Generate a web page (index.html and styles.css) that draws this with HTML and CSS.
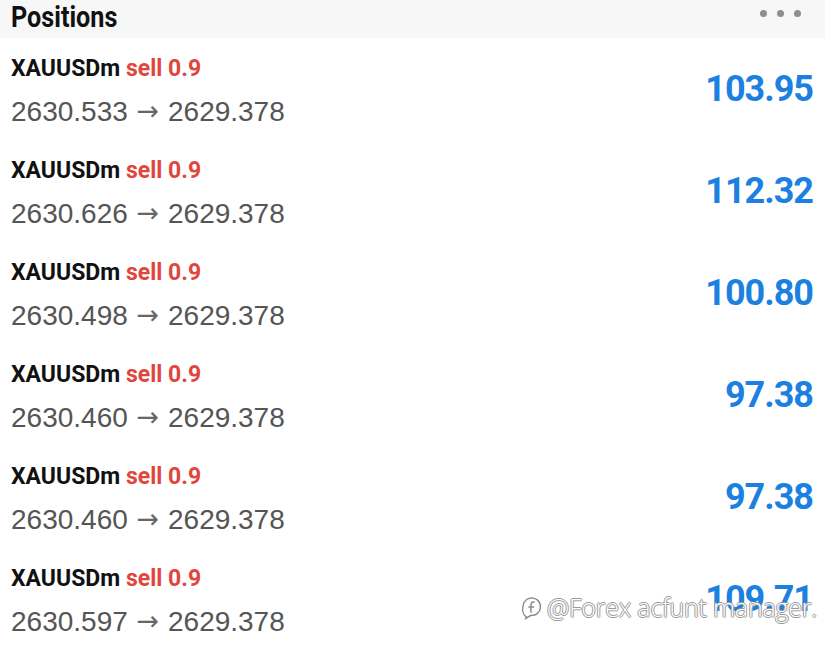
FILE: index.html
```html
<!DOCTYPE html>
<html lang="en">
<head>
  <meta charset="UTF-8">
  <title>Positions</title>
  <link rel="stylesheet" href="styles.css">
</head>
<body>

<div class="header">
  <span class="title">Positions</span>
  <div class="dots"><i></i><i></i><i></i></div>
</div>

<ul class="positions">
  <li class="row">
    <div class="info">
      <div class="symbol">XAUUSDm <span class="side">sell 0.9</span></div>
      <div class="prices">2630.533 <span class="arrow">→</span> 2629.378</div>
    </div>
    <div class="profit">103.95</div>
  </li>
  <li class="row">
    <div class="info">
      <div class="symbol">XAUUSDm <span class="side">sell 0.9</span></div>
      <div class="prices">2630.626 <span class="arrow">→</span> 2629.378</div>
    </div>
    <div class="profit">112.32</div>
  </li>
  <li class="row">
    <div class="info">
      <div class="symbol">XAUUSDm <span class="side">sell 0.9</span></div>
      <div class="prices">2630.498 <span class="arrow">→</span> 2629.378</div>
    </div>
    <div class="profit">100.80</div>
  </li>
  <li class="row">
    <div class="info">
      <div class="symbol">XAUUSDm <span class="side">sell 0.9</span></div>
      <div class="prices">2630.460 <span class="arrow">→</span> 2629.378</div>
    </div>
    <div class="profit">97.38</div>
  </li>
  <li class="row">
    <div class="info">
      <div class="symbol">XAUUSDm <span class="side">sell 0.9</span></div>
      <div class="prices">2630.460 <span class="arrow">→</span> 2629.378</div>
    </div>
    <div class="profit">97.38</div>
  </li>
  <li class="row">
    <div class="info">
      <div class="symbol">XAUUSDm <span class="side">sell 0.9</span></div>
      <div class="prices">2630.597 <span class="arrow">→</span> 2629.378</div>
    </div>
    <div class="profit">109.71</div>
  </li>
</ul>

<!-- watermark -->
<div class="watermark">
  <svg width="21" height="25" viewBox="0 0 20 24">
    <path d="M5 21 C1.5 19 1 14 2 10 C3 5 7 2.5 11.5 3 C16.5 3.5 19 8 18.5 12.5 C18 17 14 20 9.5 19.5 L4.5 22.5 Z" fill="#fff" stroke="#8a8a8a" stroke-width="1.4"/>
    <path d="M13 6.5 C10.5 6.5 9.5 7.5 9.5 10 L9.5 17 M7 11.5 L12.5 11.5" fill="none" stroke="#8a8a8a" stroke-width="1.4"/>
  </svg>
  <span>@Forex acfunt manager.</span>
</div>

</body>
</html>
```

FILE: styles.css
```css
body {
  margin: 0;
  background: #fff;
  font-family: "Liberation Sans", Arial, sans-serif;
  position: relative;
  overflow: hidden;
}

.header {
  height: 38px;
  background: #f7f7f7;
  display: flex;
  justify-content: space-between;
  align-items: flex-start;
  padding: 0 24px 0 11px;
}

.title {
  display: inline-block;
  font-family: Roboto, sans-serif;
  font-weight: bold;
  font-size: 30px;
  line-height: 34px;
  color: #111;
  transform: scaleX(0.84);
  transform-origin: left center;
}

.dots {
  display: flex;
  gap: 10px;
  margin-top: 10px;
}

.dots i {
  width: 7px;
  height: 7px;
  border-radius: 50%;
  background: #8f8f8f;
}

.positions {
  list-style: none;
  margin: 0;
  padding: 0;
}

.row {
  height: 102px;
  box-sizing: border-box;
  display: flex;
  justify-content: space-between;
  padding: 14px 12px 0 11px;
}

.symbol {
  font-family: Roboto, sans-serif;
  font-weight: bold;
  font-size: 23px;
  line-height: 34px;
  color: #111;
}

.side {
  color: #e0463c;
}

.prices {
  margin-top: 9px;
  font-size: 28px;
  line-height: 34px;
  color: #555;
}

.arrow {
  display: inline-block;
  font-family: "DejaVu Sans", sans-serif;
  font-size: 27px;
  line-height: 20px;
  margin: 0 1px;
  vertical-align: 1px;
  color: #666;
}

.profit {
  align-self: center;
  margin-top: -14px;
  font-family: Roboto, sans-serif;
  font-weight: bold;
  font-size: 36px;
  line-height: 40px;
  letter-spacing: -1px;
  color: #1c80e0;
}

.watermark {
  position: absolute;
  left: 521px;
  top: 590px;
  display: flex;
  align-items: center;
  gap: 5px;
  font-family: "Open Sans", sans-serif;
  font-weight: 300;
  font-size: 25px;
  letter-spacing: -0.2px;
  color: #fff;
  text-shadow: 1px 0 0 #999, -1px 0 0 #999, 0 1px 0 #999, 0 -1px 0 #999;
}
```
